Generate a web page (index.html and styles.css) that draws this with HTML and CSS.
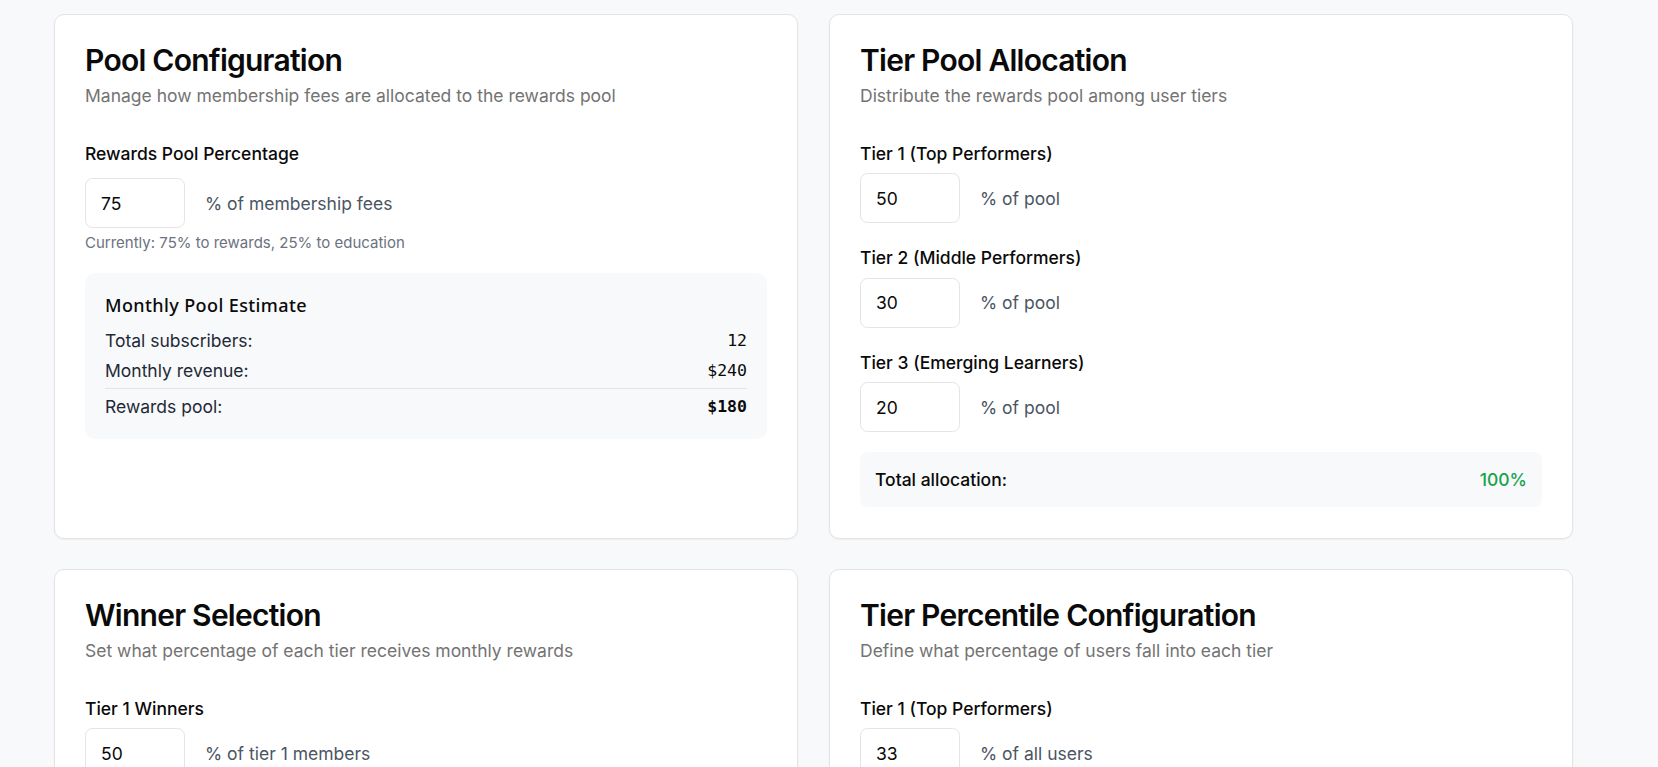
FILE: index.html
```html
<!DOCTYPE html>
<html lang="en">
<head>
<meta charset="utf-8">
<title>Rewards Configuration</title>
<link rel="stylesheet" href="styles.css">
</head>
<body>
<main class="page">
  <div class="grid">
    <section class="card">
      <header class="card-header">
        <h2 class="card-title">Pool Configuration</h2>
        <p class="card-desc">Manage how membership fees are allocated to the rewards pool</p>
      </header>
      <div class="card-content">
        <div class="field field-first">
          <label class="label">Rewards Pool Percentage</label>
          <div class="input-row input-row-loose">
            <input class="num-input" type="text" value="75">
            <span class="suffix">% of membership fees</span>
          </div>
          <p class="hint">Currently: 75% to rewards, 25% to education</p>
        </div>
        <div class="estimate">
          <h4 class="estimate-title">Monthly Pool Estimate</h4>
          <div class="estimate-row"><span>Total subscribers:</span><span class="mono">12</span></div>
          <div class="estimate-row"><span>Monthly revenue:</span><span class="mono">$240</span></div>
          <div class="estimate-row estimate-total"><span>Rewards pool:</span><span class="mono strong">$180</span></div>
        </div>
      </div>
    </section>

    <section class="card">
      <header class="card-header">
        <h2 class="card-title">Tier Pool Allocation</h2>
        <p class="card-desc">Distribute the rewards pool among user tiers</p>
      </header>
      <div class="card-content">
        <div class="field field-first">
          <label class="label">Tier 1 (Top Performers)</label>
          <div class="input-row">
            <input class="num-input" type="text" value="50">
            <span class="suffix">% of pool</span>
          </div>
        </div>
        <div class="field">
          <label class="label">Tier 2 (Middle Performers)</label>
          <div class="input-row">
            <input class="num-input" type="text" value="30">
            <span class="suffix">% of pool</span>
          </div>
        </div>
        <div class="field">
          <label class="label">Tier 3 (Emerging Learners)</label>
          <div class="input-row">
            <input class="num-input" type="text" value="20">
            <span class="suffix">% of pool</span>
          </div>
        </div>
        <div class="total">
          <span class="total-label">Total allocation:</span>
          <span class="total-value">100%</span>
        </div>
      </div>
    </section>

    <section class="card">
      <header class="card-header">
        <h2 class="card-title">Winner Selection</h2>
        <p class="card-desc">Set what percentage of each tier receives monthly rewards</p>
      </header>
      <div class="card-content">
        <div class="field field-first">
          <label class="label">Tier 1 Winners</label>
          <div class="input-row">
            <input class="num-input" type="text" value="50">
            <span class="suffix">% of tier 1 members</span>
          </div>
        </div>
        <div class="field">
          <label class="label">Tier 2 Winners</label>
          <div class="input-row">
            <input class="num-input" type="text" value="30">
            <span class="suffix">% of tier 2 members</span>
          </div>
        </div>
        <div class="field">
          <label class="label">Tier 3 Winners</label>
          <div class="input-row">
            <input class="num-input" type="text" value="20">
            <span class="suffix">% of tier 3 members</span>
          </div>
        </div>
      </div>
    </section>

    <section class="card">
      <header class="card-header">
        <h2 class="card-title">Tier Percentile Configuration</h2>
        <p class="card-desc">Define what percentage of users fall into each tier</p>
      </header>
      <div class="card-content">
        <div class="field field-first">
          <label class="label">Tier 1 (Top Performers)</label>
          <div class="input-row">
            <input class="num-input" type="text" value="33">
            <span class="suffix">% of all users</span>
          </div>
        </div>
        <div class="field">
          <label class="label">Tier 2 (Middle Performers)</label>
          <div class="input-row">
            <input class="num-input" type="text" value="33">
            <span class="suffix">% of all users</span>
          </div>
        </div>
        <div class="field">
          <label class="label">Tier 3 (Emerging Learners)</label>
          <div class="input-row">
            <input class="num-input" type="text" value="34">
            <span class="suffix">% of all users</span>
          </div>
        </div>
      </div>
    </section>
  </div>
</main>
</body>
</html>
```

FILE: styles.css
```css
* { box-sizing: border-box; }

html, body {
  margin: 0;
  padding: 0;
  background: #f8f9fb;
  height: 100%;
  overflow: hidden;
}

body {
  font-family: Inter, "Liberation Sans", sans-serif;
  color: #0a0a0a;
}

.page {
  padding: 14px 0 40px 54px;
}

.grid {
  width: 1519px;
  display: grid;
  grid-template-columns: 1fr 1fr;
  column-gap: 31px;
  row-gap: 30px;
}

.card {
  background: #ffffff;
  border: 1px solid #e4e4e7;
  border-radius: 10px;
  box-shadow: 0 1px 2px rgba(0, 0, 0, 0.05);
}

.card-header {
  padding: 30px 30px 30px;
}

.card-title {
  margin: 0;
  font-size: 30px;
  line-height: 30px;
  font-weight: 600;
  letter-spacing: -0.75px;
  color: #0a0a0a;
}

.card-desc {
  margin: 7.5px 0 0;
  font-size: 17.5px;
  line-height: 25px;
  color: #737373;
}

.card-content {
  padding: 7px 30px 31px;
}

.field + .field {
  margin-top: 26px;
}

.label {
  display: block;
  font-size: 17.5px;
  line-height: 17.5px;
  font-weight: 500;
  color: #0a0a0a;
}

.input-row {
  display: flex;
  align-items: center;
  gap: 20px;
  margin-top: 11px;
}

.input-row-loose {
  margin-top: 16px;
}

.num-input {
  width: 100px;
  height: 50px;
  padding: 0 15px;
  border: 1px solid #e4e4e7;
  border-radius: 7.5px;
  background: #ffffff;
  font-family: Inter, "Liberation Sans", sans-serif;
  font-size: 17.5px;
  color: #0a0a0a;
  outline: none;
}

.suffix {
  font-size: 17.5px;
  line-height: 25px;
  color: #4b5563;
}

.hint {
  margin: 5px 0 0;
  font-size: 15px;
  line-height: 20px;
  color: #6b7280;
}

.estimate {
  margin-top: 20px;
  background: #f8f9fb;
  border-radius: 10px;
  padding: 20px;
}

.estimate-title {
  margin: 0 0 10px;
  font-family: "Noto Sans", Inter, sans-serif;
  font-size: 18px;
  line-height: 25px;
  font-weight: 500;
  letter-spacing: 0.4px;
  color: #0a0a0a;
}

.estimate-row {
  display: flex;
  justify-content: space-between;
  align-items: center;
  font-size: 17.5px;
  line-height: 25px;
  color: #1f2937;
}

.estimate-row + .estimate-row {
  margin-top: 5px;
}

.estimate-total {
  border-top: 1px solid #e4e4e7;
  padding-top: 5px;
}

.mono {
  font-family: "DejaVu Sans Mono", "Liberation Mono", monospace;
  font-size: 16.5px;
  color: #0a0a0a;
}

.strong {
  font-weight: 700;
}

.total {
  margin-top: 20px;
  display: flex;
  justify-content: space-between;
  align-items: center;
  background: #f8f9fb;
  border-radius: 7.5px;
  padding: 15px;
  font-size: 17.5px;
  line-height: 25px;
}

.total-label {
  font-weight: 500;
  color: #0a0a0a;
}

.total-value {
  color: #16a34a;
  font-weight: 500;
}
```
